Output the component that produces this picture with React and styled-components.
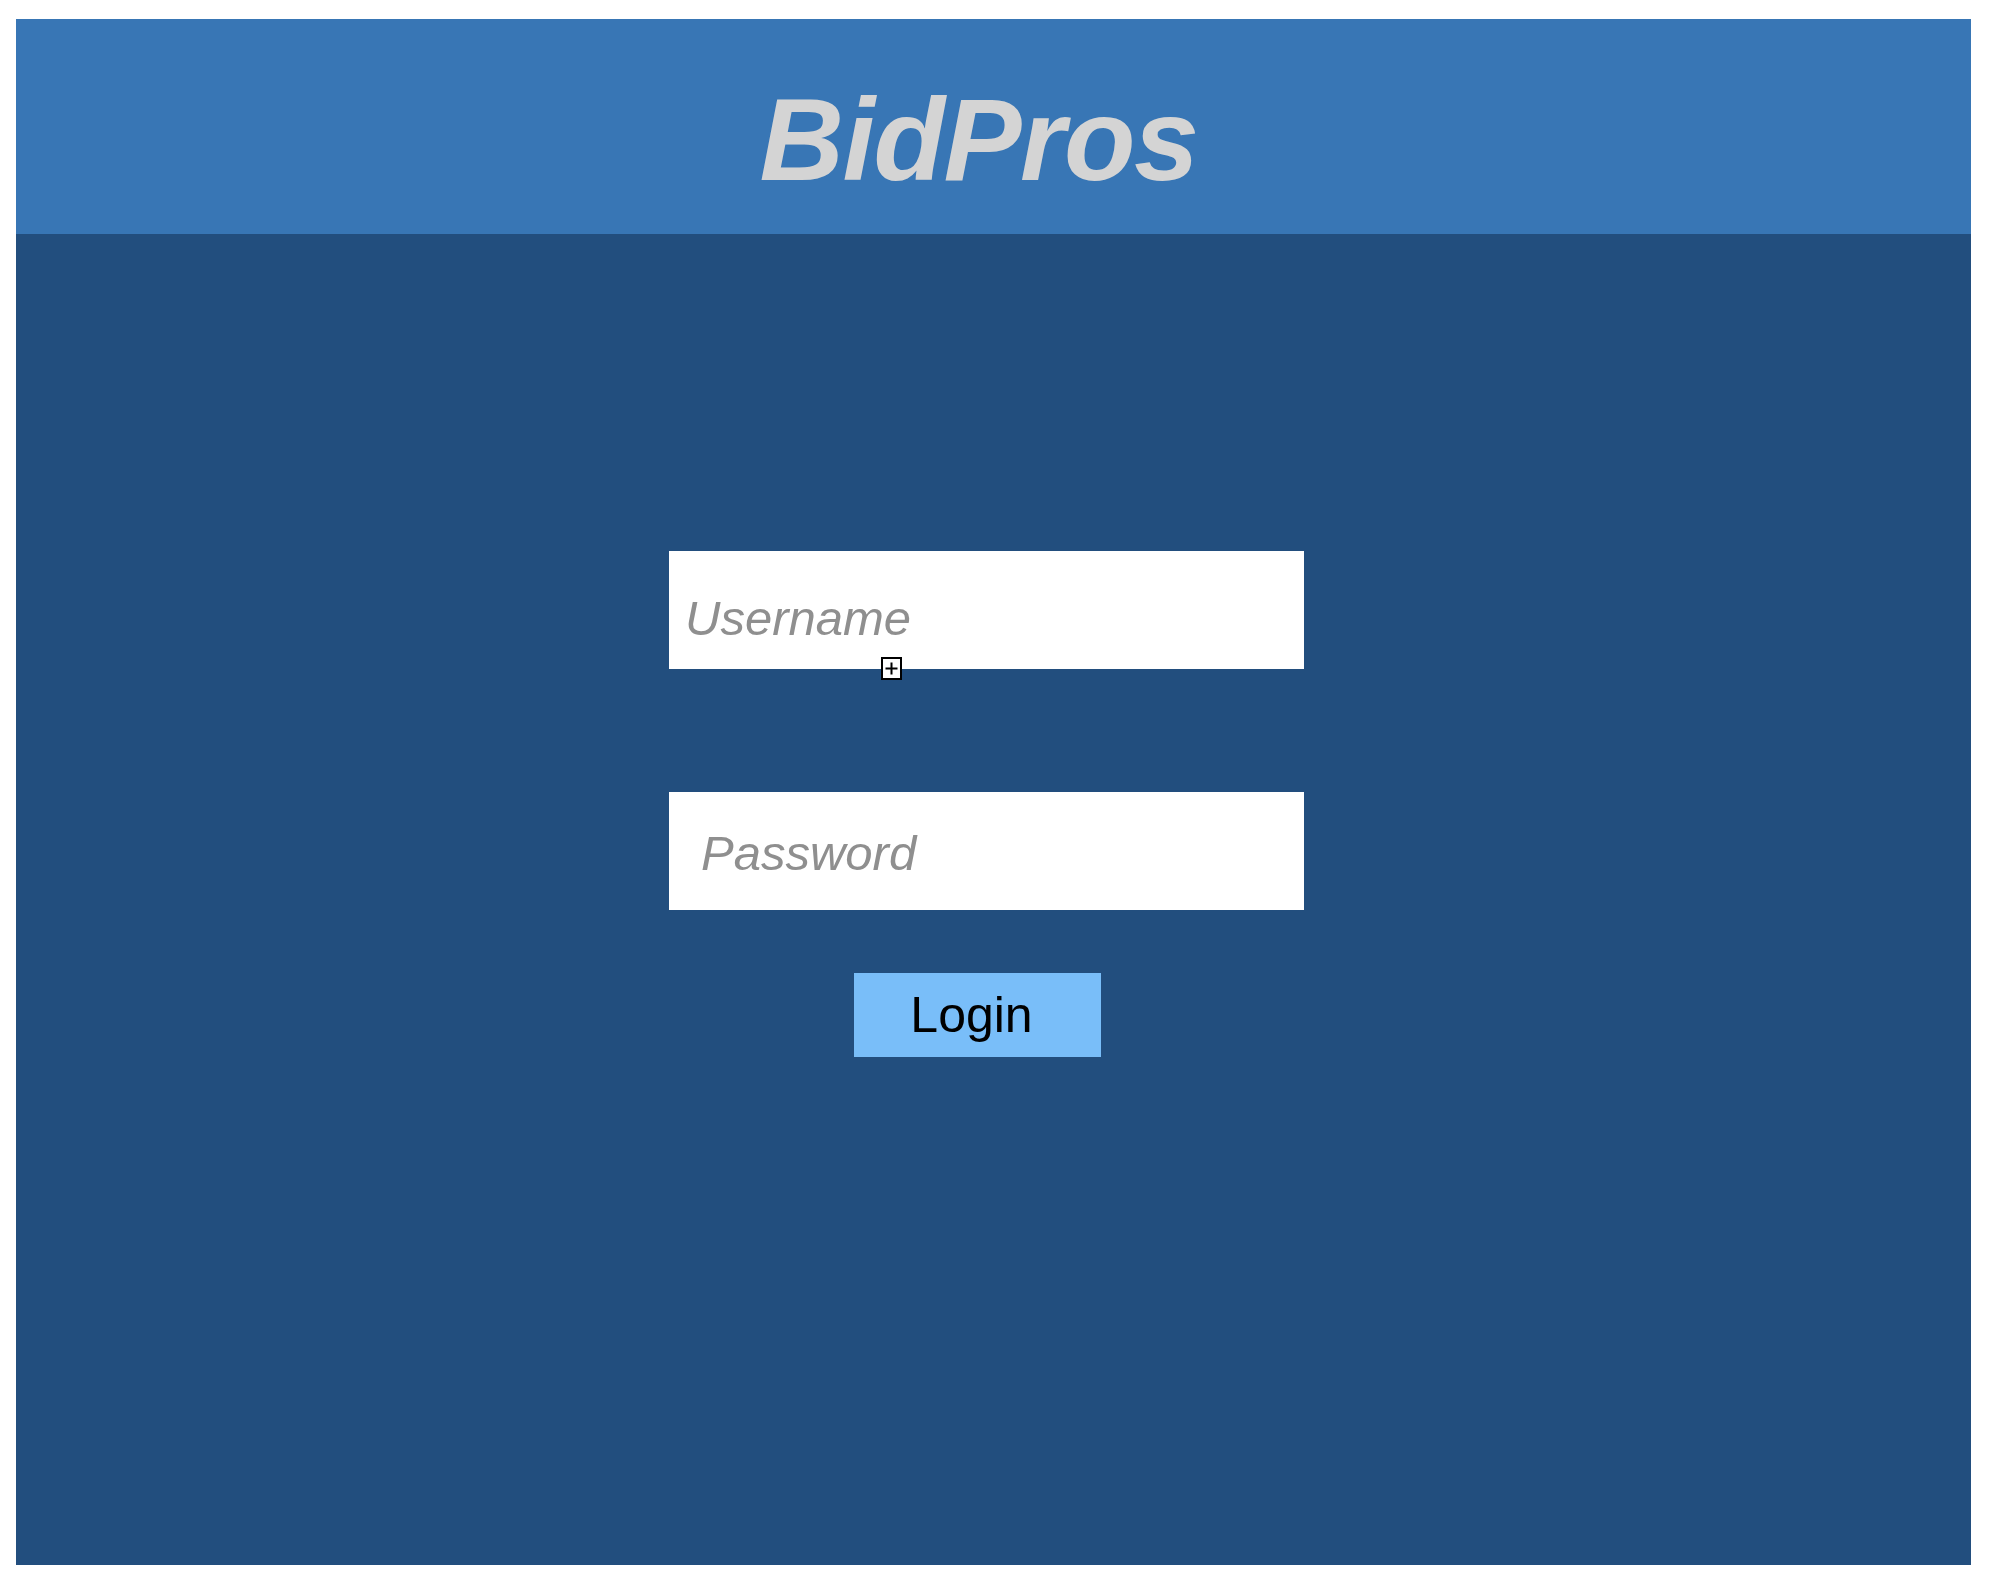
import React from "react";
import styled, { createGlobalStyle } from "styled-components";

const Global = createGlobalStyle`
  html, body { margin: 0; padding: 0; background: #ffffff; }
  body { font-family: "Liberation Sans", Arial, Helvetica, sans-serif; }
  * { box-sizing: border-box; }
`;

const Page = styled.div`
  padding: 19px 19px 17px 16px;
`;

const Frame = styled.div`
  width: 1955px;
  height: 1546px;
  background: #224e7e;
  display: flex;
  flex-direction: column;
`;

const Header = styled.header`
  height: 215px;
  background: #3876b5;
  display: flex;
  align-items: center;
  justify-content: center;
  padding: 26px 30px 0 0;
`;

const Title = styled.h1`
  margin: 0;
  font-family: "Liberation Sans", Arial, Helvetica, sans-serif;
  font-weight: 700;
  font-style: italic;
  font-size: 117px;
  letter-spacing: -1.5px;
  line-height: 1;
  color: #d4d4d4;
`;

const Form = styled.form`
  margin: 317px 0 0 653px;
  width: 635px;
  display: flex;
  flex-direction: column;
  align-items: flex-start;
`;

const Field = styled.div`
  position: relative;
  width: 635px;
  margin-bottom: ${(p) => p.$gap}px;
`;

const Input = styled.input`
  display: block;
  width: 635px;
  height: 118px;
  border: none;
  outline: none;
  background: #ffffff;
  margin: 0;
  padding: ${(p) => p.$top}px 0 0 ${(p) => p.$left}px;
  font-family: "Liberation Sans", Arial, Helvetica, sans-serif;
  font-size: 49px;
  font-style: italic;
  color: #333;
  &::placeholder {
    color: #8f8f8f;
    font-style: italic;
    opacity: 1;
  }
`;

const Handle = styled.span`
  position: absolute;
  left: 212px;
  top: 106px;
  width: 21px;
  height: 23px;
  border: 2px solid #000;
  background: #fff;
  display: flex;
  align-items: center;
  justify-content: center;
`;

const LoginButton = styled.button`
  margin-left: 185px;
  width: 247px;
  height: 84px;
  border: none;
  background: #79bef9;
  color: #000;
  font-family: "Liberation Sans", Arial, Helvetica, sans-serif;
  font-size: 50px;
  padding: 0 12px 0 0;
  cursor: pointer;
`;

export default function App() {
  return (
    <>
      <Global />
      <Page>
        <Frame>
          <Header>
            <Title>BidPros</Title>
          </Header>
          <Form onSubmit={(e) => e.preventDefault()}>
            <Field $gap={123}>
              <Input type="text" placeholder="Username" $top={15} $left={16} />
              <Handle>
                <svg width="15" height="15" viewBox="0 0 15 15">
                  <path d="M7.5 1.5v12M1.5 7.5h12" stroke="#000" strokeWidth="2" fill="none" />
                </svg>
              </Handle>
            </Field>
            <Field $gap={63}>
              <Input type="password" placeholder="Password" $top={3} $left={32} />
            </Field>
            <LoginButton type="submit">Login</LoginButton>
          </Form>
        </Frame>
      </Page>
    </>
  );
}
